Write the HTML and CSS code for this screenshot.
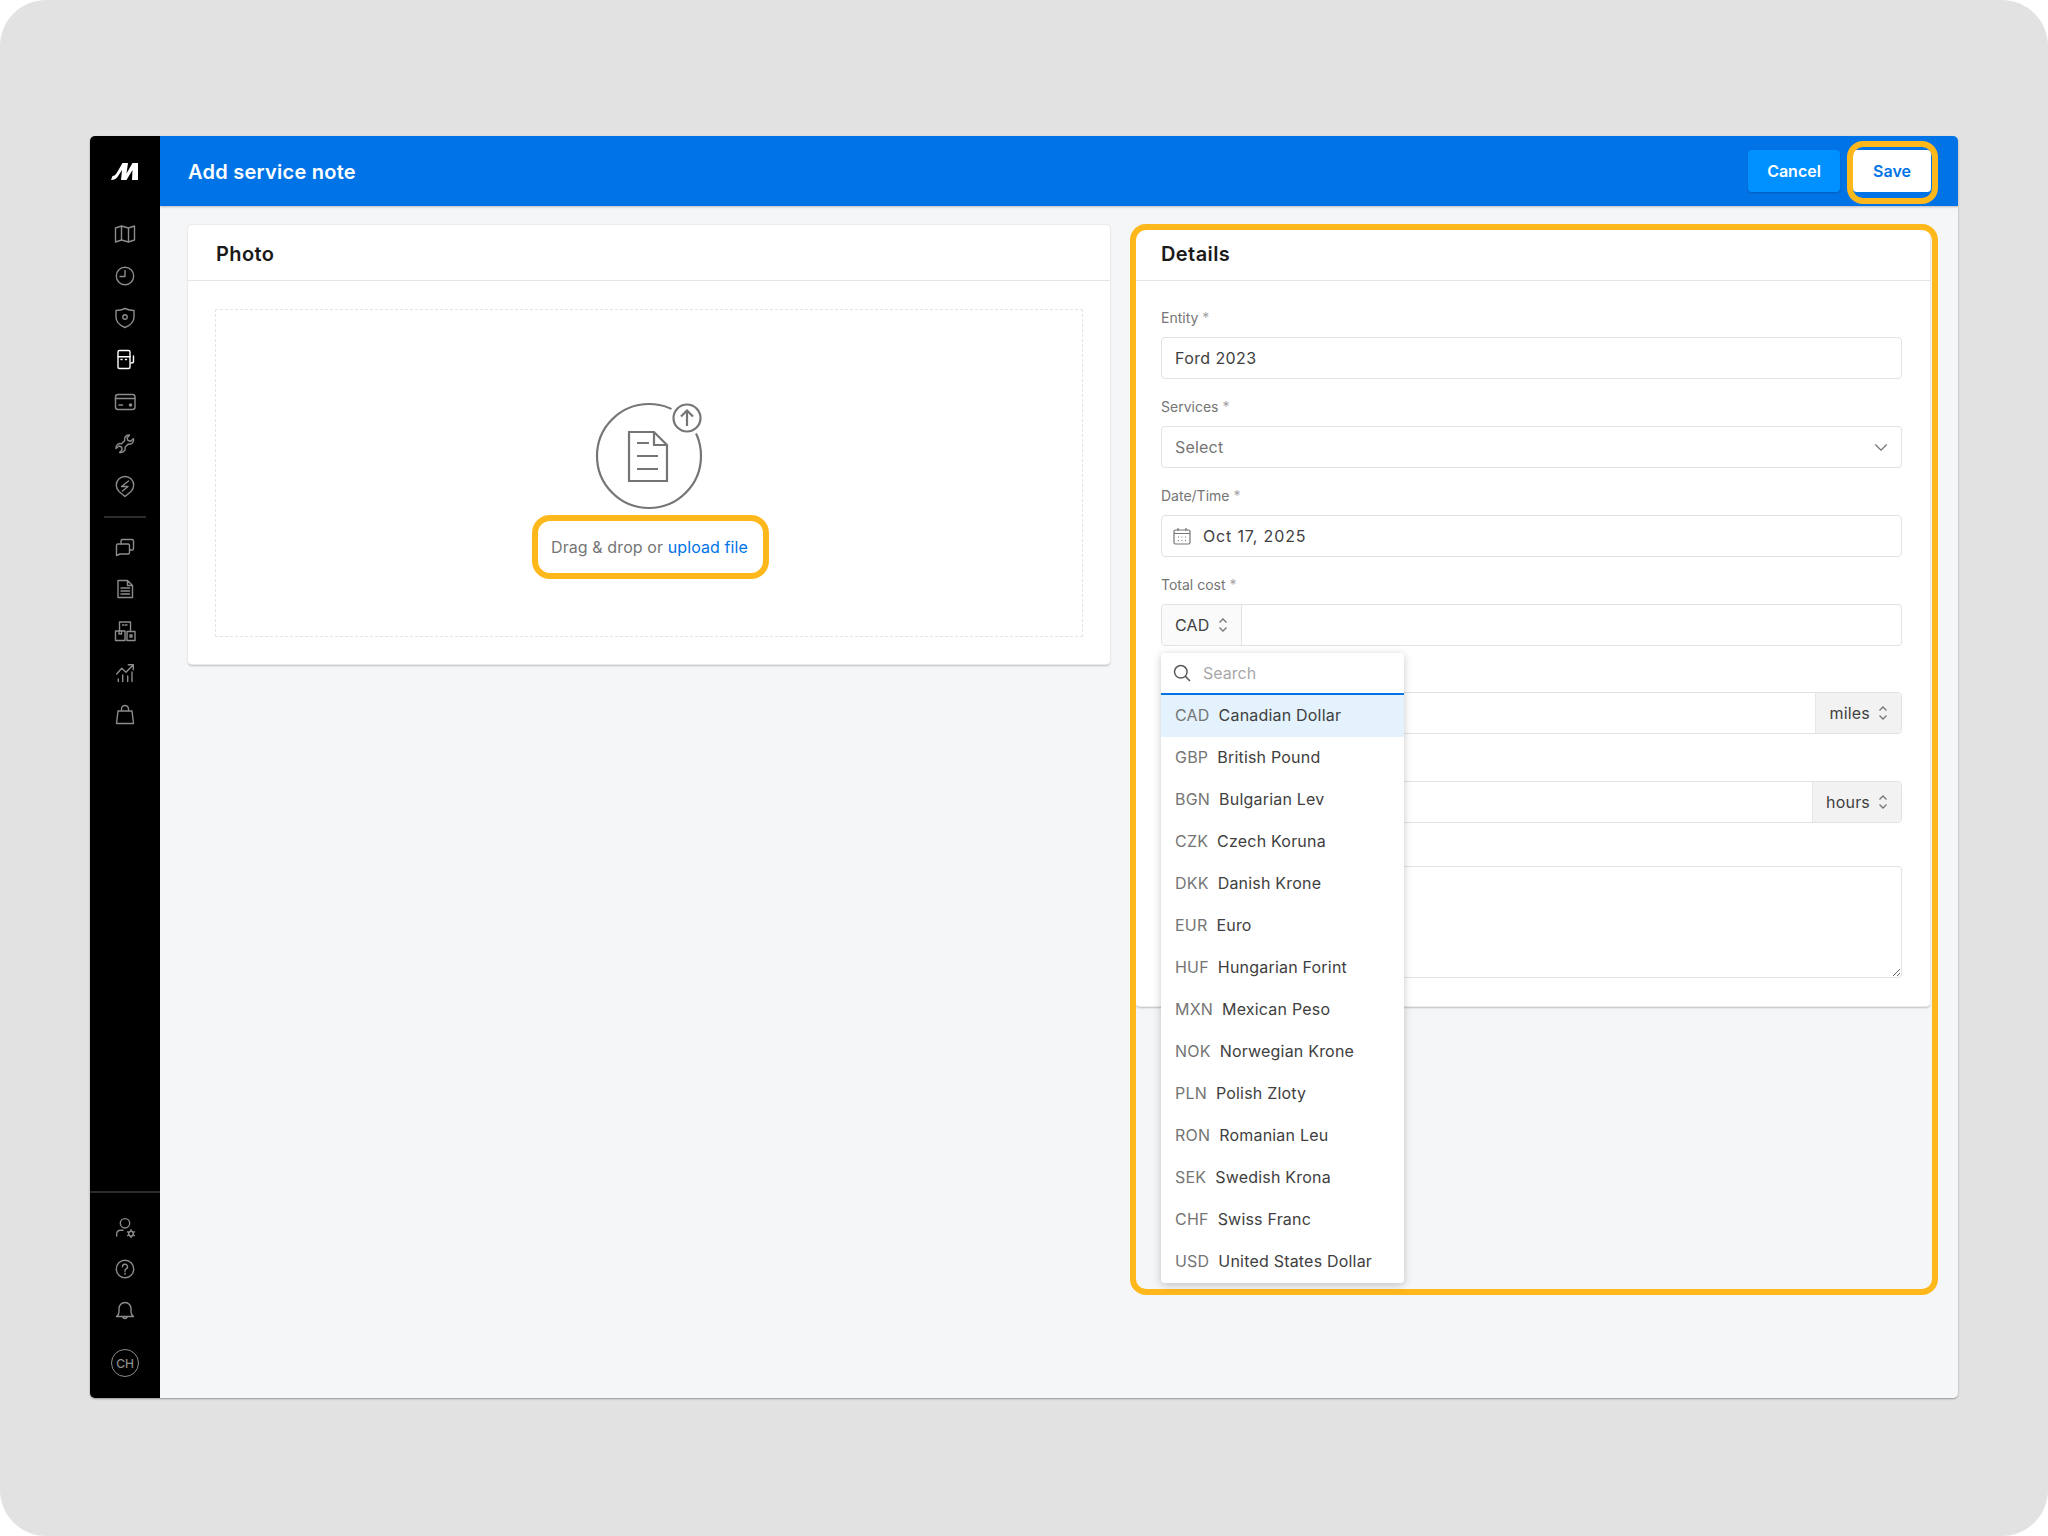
FILE: index.html
```html
<!DOCTYPE html>
<html lang="en">

<head>
  <meta charset="UTF-8">
  <meta name="viewport" content="width=device-width, initial-scale=1.0">
  <title>Add service note</title>
  <link rel="stylesheet" href="styles.css">
</head>

<body>
  <div class="stage">
    <div class="app">
      <!-- sidebar -->
      <div class="side">
        <div class="logo">
          <svg width="27" height="17" viewBox="0 0 27 17"><path fill="#fff" d="M0 17 L1.5 13 Q4 13 6 9.5 L11.5 0 H17 L15.5 10.5 L21.5 0 H27 V17 H21 L21.5 7 L15.5 17 H10 L11 7 L6.5 14 Q4.5 17 0 17Z"/></svg>
        </div>
        <div class="nav-item"><svg class="ico" viewBox="0 0 30 30"><path d="M5.5 9 11.5 7 18.5 9 24.5 7V21L18.5 23 11.5 21 5.5 23ZM11.5 7V21M18.5 9V23"/></svg></div>
        <div class="nav-item"><svg class="ico" viewBox="0 0 30 30"><circle cx="15" cy="15" r="8.7"/><path d="M15 9.5V15.5H10"/></svg></div>
        <div class="nav-item"><svg class="ico" viewBox="0 0 30 30"><path d="M15 5.5C12 7 9 7.5 6 7.5V14C6 19 10 22.5 15 24.5 20 22.5 24 19 24 14V7.5C21 7.5 18 7 15 5.5Z"/><circle cx="15" cy="14" r="2.2"/></svg></div>
        <div class="nav-item"><svg class="ico ico-on" viewBox="0 0 30 30"><rect x="8" y="5.5" width="12" height="18" rx="1.5"/><path d="M8 11.7H20M23.5 11V16.5C23.5 17.5 22.5 18 21 18M11 14.5H12M15.5 14.5H16.5"/></svg></div>
        <div class="nav-item"><svg class="ico" viewBox="0 0 30 30"><rect x="5.5" y="7.5" width="19.5" height="15" rx="2.5"/><path d="M5.5 11.5H25M9 18H12.5"/><circle class="solid" cx="20.5" cy="18" r="1.8"/></svg></div>
        <div class="nav-item"><svg class="ico" viewBox="0 0 30 30"><path d="M19.5 6C16 5.6 13.8 8.6 14.8 11.6L11.6 14.8C8.6 13.8 5.6 16 6 19.5L9 17 11.5 18 12.2 20.8 9.6 23.5C13 24.2 16 21.5 15 18.2L18.2 15C21.5 16 24.3 13 23.5 9.6L20.8 12.2 18 11.5 17 9Z"/></svg></div>
        <div class="nav-item"><svg class="ico" viewBox="0 0 30 30"><path d="M15 25.5 9 20.5A8.7 8.7 0 1 1 21 20.5ZM18.5 10 11.5 15.5H18L12.5 20"/></svg></div>
        <div class="side-line"></div>
        <div class="nav-item"><svg class="ico" viewBox="0 0 30 30"><path d="M11 12V9A1.5 1.5 0 0 1 12.5 7.5H22A1.5 1.5 0 0 1 23.5 9V16.5A1.5 1.5 0 0 1 22 18H19.5"/><path d="M8 12H18A1.5 1.5 0 0 1 19.5 13.5V20.5A1.5 1.5 0 0 1 18 22H10L6.5 23.5V13.5A1.5 1.5 0 0 1 8 12Z"/></svg></div>
        <div class="nav-item"><svg class="ico" viewBox="0 0 30 30"><path d="M8 6.5H17.5L22.5 11.5V23.5H8ZM17.5 6.5V11.5H22.5M11 14H19.5M11 17H19.5M11 20H19.5"/></svg></div>
        <div class="nav-item"><svg class="ico" viewBox="0 0 30 30"><path d="M9.5 15V6H20.5V15M12.5 9H14M15.5 9H17"/><rect x="5.5" y="15" width="9.5" height="9.5"/><path d="M9 15V18H11.5V15"/><rect x="17" y="15.5" width="8" height="9"/><rect x="20" y="19" width="2" height="2"/></svg></div>
        <div class="nav-item"><svg class="ico" viewBox="0 0 30 30"><path d="M6.7 16 11.7 10.3 16 14.3 23.3 6.7M18.3 6.7H23.3V11.7M8.3 21V23.5M12.7 17V23.5M17.7 18V23.5M22 14V23.5"/></svg></div>
        <div class="nav-item"><svg class="ico" viewBox="0 0 30 30"><path d="M8 11H22L23.5 23.5H6.5ZM11.5 11V9A3.5 3.5 0 0 1 18.5 9V11"/></svg></div>

        <div class="side-bottom">
          <div class="nav-item"><svg class="ico" viewBox="0 0 30 30"><circle cx="15" cy="11.3" r="4.7"/><path d="M6.7 24V21.5A3.5 3.5 0 0 1 10.5 18.3H13"/><circle cx="21" cy="21.7" r="2.4"/><path d="M21 17.8V19.3M21 24.1V25.6M17.6 19.8 18.9 20.5M23.1 22.9 24.4 23.6M17.6 23.6 18.9 22.9M23.1 20.5 24.4 19.8"/></svg></div>
          <div class="nav-item"><svg class="ico" viewBox="0 0 30 30"><circle cx="15" cy="15" r="8.7"/><path d="M12.5 12.7A2.5 2.5 0 1 1 16.2 14.9C15.4 15.4 15 15.9 15 16.8V17.2M15 19.3V20.2"/></svg></div>
          <div class="nav-item"><svg class="ico" viewBox="0 0 30 30"><path d="M15 6.5A6 6 0 0 0 9 12.5V16C9 18 8 19.5 6.5 20.5H23.5C22 19.5 21 18 21 16V12.5A6 6 0 0 0 15 6.5ZM13 20.5A2 2 0 0 0 17 20.5"/></svg></div>
          <div class="avatar">CH</div>
        </div>
      </div>

      <div class="content">
        <!-- top bar -->
        <div class="topbar">
          <div class="page-title">Add service note</div>
          <div class="top-btns">
            <div class="btn btn-cancel">Cancel</div>
            <div class="btn btn-save">Save</div>
          </div>
          <div class="hl hl-save"></div>
        </div>

        <div class="main">
          <!-- photo -->
          <div class="card card-photo">
            <div class="card-head">Photo</div>
            <div class="card-body">
              <div class="drop">
                <svg class="drop-ico" width="120" height="110" viewBox="0 0 120 110">
                  <circle cx="58" cy="54" r="52"/>
                  <circle class="halo" cx="96" cy="16" r="18"/>
                  <circle cx="96" cy="16" r="13.5"/>
                  <path d="M96 24V9M90 14.5 96 8.5 102 14.5"/>
                  <path d="M38 30H63L76 43V79H38ZM63 30V43H76M46 41H58M46 54H67M46 67H67"/>
                </svg>
                <div class="drop-text">Drag &amp; drop or <span class="link">upload file</span></div>
              </div>
            </div>
          </div>

          <!-- details -->
          <div class="card card-details">
            <div class="card-head">Details</div>
            <div class="card-body form">
              <div class="field">
                <div class="lbl">Entity <span class="star">*</span></div>
                <div class="inp inp-text">Ford 2023</div>
              </div>
              <div class="field">
                <div class="lbl">Services <span class="star">*</span></div>
                <div class="inp inp-select">
                  <span class="muted">Select</span>
                  <svg class="chev" width="14" height="9" viewBox="0 0 16 10"><path d="M1.5 1.5 8 8 14.5 1.5"/></svg>
                </div>
              </div>
              <div class="field">
                <div class="lbl">Date/Time <span class="star">*</span></div>
                <div class="inp inp-date">
                  <svg class="cal" width="18" height="18" viewBox="0 0 18 18"><rect x="1" y="3" width="16" height="14" rx="1.5"/><path d="M1 6.5H17M5 1V4M13 1V4"/><path d="M5 10H6M8.5 10H9.5M12 10H13M5 13.5H6M8.5 13.5H9.5M12 13.5H13"/></svg>
                  <span>Oct 17, 2025</span>
                </div>
              </div>
              <div class="field field-cost">
                <div class="lbl">Total cost <span class="star">*</span></div>
                <div class="group">
                  <div class="addon addon-left">CAD <svg class="updown" width="10" height="16" viewBox="0 0 10 16"><path d="M1.5 5.5 5 2 8.5 5.5M1.5 10.5 5 14 8.5 10.5"/></svg></div>
                  <div class="group-fill"></div>

                  <!-- open currency menu -->
                  <div class="menu">
                    <div class="menu-search">
                      <svg class="search-ico" width="18" height="18" viewBox="0 0 18 18"><circle cx="7.8" cy="7.8" r="6.3"/><path d="M12.4 12.4 17 17"/></svg>
                      <span class="search-ph">Search</span>
                    </div>
                    <div class="opt opt-on"><span class="code">CAD</span>Canadian Dollar</div>
                    <div class="opt"><span class="code">GBP</span>British Pound</div>
                    <div class="opt"><span class="code">BGN</span>Bulgarian Lev</div>
                    <div class="opt"><span class="code">CZK</span>Czech Koruna</div>
                    <div class="opt"><span class="code">DKK</span>Danish Krone</div>
                    <div class="opt"><span class="code">EUR</span>Euro</div>
                    <div class="opt"><span class="code">HUF</span>Hungarian Forint</div>
                    <div class="opt"><span class="code">MXN</span>Mexican Peso</div>
                    <div class="opt"><span class="code">NOK</span>Norwegian Krone</div>
                    <div class="opt"><span class="code">PLN</span>Polish Zloty</div>
                    <div class="opt"><span class="code">RON</span>Romanian Leu</div>
                    <div class="opt"><span class="code">SEK</span>Swedish Krona</div>
                    <div class="opt"><span class="code">CHF</span>Swiss Franc</div>
                    <div class="opt"><span class="code">USD</span>United States Dollar</div>
                  </div>
                </div>
              </div>
              <div class="field">
                <div class="lbl"></div>
                <div class="group">
                  <div class="group-fill"></div>
                  <div class="addon addon-right">miles <svg class="updown" width="10" height="16" viewBox="0 0 10 16"><path d="M1.5 5.5 5 2 8.5 5.5M1.5 10.5 5 14 8.5 10.5"/></svg></div>
                </div>
              </div>
              <div class="field">
                <div class="lbl"></div>
                <div class="group">
                  <div class="group-fill"></div>
                  <div class="addon addon-right">hours <svg class="updown" width="10" height="16" viewBox="0 0 10 16"><path d="M1.5 5.5 5 2 8.5 5.5M1.5 10.5 5 14 8.5 10.5"/></svg></div>
                </div>
              </div>
              <div class="field field-notes">
                <textarea class="notes"></textarea>
              </div>
            </div>
          </div>
          <div class="hl hl-details"></div>
        </div>
      </div>
    </div>
  </div>
</body>

</html>
```
FILE: styles.css
```css
* {
  box-sizing: border-box;
}

html,
body {
  margin: 0;
  background: #fff;
  font-family: Inter, "Liberation Sans", sans-serif;
}

.stage {
  width: 2048px;
  height: 1536px;
  padding: 136px 90px 138px 90px;
  background: #e2e2e2;
  border-radius: 46px;
}

.app {
  display: flex;
  height: 1262px;
  border-radius: 5px;
  overflow: hidden;
  box-shadow: 0 1px 2px rgba(0, 0, 0, .35);
}

/* sidebar */
.side {
  display: flex;
  flex-direction: column;
  flex: none;
  width: 70px;
  background: #000;
}

.logo {
  display: flex;
  justify-content: center;
  align-items: center;
  height: 70px;
  margin-bottom: 7px;
  padding-right: 2px;
}

.nav-item {
  display: flex;
  justify-content: center;
  align-items: center;
  height: 42px;
}

.ico {
  width: 30px;
  height: 30px;
  fill: none;
  stroke: #8c8c8c;
  stroke-width: 1.4;
  stroke-linejoin: round;
  stroke-linecap: round;
}

.ico .solid {
  fill: #8c8c8c;
  stroke: none;
}

.ico-on {
  stroke: #fff;
}

.side-line {
  width: 42px;
  height: 2px;
  margin: 9px auto 8px;
  background: #2b2b2b;
}

.side-bottom {
  margin-top: auto;
  padding: 13px 0 21px;
  border-top: 2px solid #2b2b2b;
}

.avatar {
  display: flex;
  justify-content: center;
  align-items: center;
  width: 28px;
  height: 28px;
  margin: 17px auto 0;
  border: 1.5px solid #8c8c8c;
  border-radius: 50%;
  color: #8c8c8c;
  font-size: 12px;
  font-weight: 500;
}

/* right side */
.content {
  display: flex;
  flex-direction: column;
  flex: 1;
  min-width: 0;
  background: #f4f6f8;
}

.topbar {
  position: relative;
  display: flex;
  justify-content: space-between;
  align-items: center;
  flex: none;
  height: 70px;
  padding: 0 27px 0 28px;
  background: #0073e6;
  box-shadow: 0 1px 2px rgba(0, 0, 0, .25);
}

.page-title {
  padding-top: 2px;
  color: #fff;
  font-size: 20px;
  font-weight: 600;
  letter-spacing: .25px;
}

.top-btns {
  display: flex;
  gap: 13px;
}

.btn {
  display: flex;
  justify-content: center;
  align-items: center;
  height: 42px;
  border-radius: 4px;
  font-size: 16px;
  font-weight: 600;
}

.btn-cancel {
  width: 92px;
  background: #0090ff;
  color: #fff;
  box-shadow: 0 1px 2px rgba(0, 0, 0, .2);
}

.btn-save {
  width: 78px;
  background: #fff;
  color: #0073e6;
}

/* orange callouts */
.hl {
  position: absolute;
  border: 6px solid #ffb81c;
  pointer-events: none;
}

.hl-save {
  top: 5px;
  right: 20px;
  width: 91px;
  height: 63px;
  border-radius: 16px;
}

.hl-details {
  top: 18px;
  left: 970px;
  width: 808px;
  height: 1071px;
  border-radius: 16px;
}

.main {
  position: relative;
  display: flex;
  align-items: flex-start;
  gap: 26px;
  flex: 1;
  padding: 19px 28px 0;
}

.card {
  flex: none;
  background: #fff;
  border-radius: 4px;
  box-shadow: 0 0 0 1px #ebebeb, 0 2px 2px rgba(0, 0, 0, .22);
}

.card-photo {
  width: 922px;
  height: 439px;
}

.card-details {
  width: 794px;
  height: 781px;
}

.card-head {
  height: 56px;
  padding: 0 28px;
  border-bottom: 1px solid #e4e4e4;
  color: #1a1a1a;
  font-size: 20px;
  font-weight: 600;
  letter-spacing: .4px;
  line-height: 58px;
}

.card-details .card-head {
  padding-left: 25px;
}

.card-photo .card-body {
  padding: 28px 27px 27px;
}

/* drop zone */
.drop {
  display: flex;
  flex-direction: column;
  align-items: center;
  height: 328px;
  padding-top: 92px;
  border: 1px dashed #e4e4e4;
}

.drop-ico {
  flex: none;
  margin-left: 4px;
  fill: none;
  stroke: #757575;
  stroke-width: 2.2;
}

.drop-ico .halo {
  fill: #fff;
  stroke: none;
}

.drop-text {
  flex: none;
  width: 237px;
  height: 64px;
  margin: 3px 0 0 3px;
  padding-right: 2px;
  border: 6px solid #ffb81c;
  border-radius: 18px;
  color: #757575;
  font-size: 16px;
  letter-spacing: .1px;
  line-height: 52px;
  text-align: center;
  white-space: nowrap;
}

.link {
  color: #0073e6;
}

/* form */
.form {
  padding: 27px 28px 28px 25px;
}

.field {
  margin-bottom: 18px;
}

.field-cost {
  margin-bottom: 17px;
}

.lbl {
  height: 20px;
  margin-bottom: 9px;
  color: #757575;
  font-size: 14px;
  line-height: 20px;
}

.star {
  color: #a3a3a3;
}

.inp {
  display: flex;
  align-items: center;
  height: 42px;
  padding: 0 13px;
  border: 1px solid #e2e2e2;
  border-radius: 4px;
  color: #404040;
  font-size: 16px;
}

.inp-text {
  letter-spacing: .4px;
}

.inp-select {
  justify-content: space-between;
  letter-spacing: .2px;
}

.muted {
  color: #757575;
}

.chev {
  flex: none;
  fill: none;
  stroke: #757575;
  stroke-width: 1.5;
}

.inp-date {
  gap: 12px;
  padding-left: 11px;
  letter-spacing: .85px;
}

.cal {
  flex: none;
  fill: none;
  stroke: #757575;
  stroke-width: 1.2;
}

.group {
  position: relative;
  display: flex;
  height: 42px;
  border: 1px solid #e2e2e2;
  border-radius: 4px;
}

.group-fill {
  flex: 1;
}

.addon {
  display: flex;
  align-items: center;
  gap: 8px;
  flex: none;
  height: 40px;
  padding: 0 13px;
  color: #404040;
  font-size: 16px;
  letter-spacing: .2px;
}

.addon-left {
  width: 80px;
  background: #fafafa;
  border-right: 1px solid #e2e2e2;
  border-radius: 4px 0 0 4px;
}

.addon-right {
  background: #f2f2f2;
  border-left: 1px solid #e8e8e8;
  border-radius: 0 4px 4px 0;
}

.updown {
  flex: none;
  fill: none;
  stroke: #757575;
  stroke-width: 1.3;
}

.field-notes {
  margin: -4px 0 0;
  padding-top: 29px;
}

.notes {
  display: block;
  width: 100%;
  height: 112px;
  border: 1px solid #e2e2e2;
  border-radius: 4px;
  outline: none;
  background: #fff;
}

/* currency menu */
.menu {
  position: absolute;
  top: 48px;
  left: -1px;
  z-index: 5;
  width: 243px;
  background: #fff;
  border-radius: 4px;
  box-shadow: 0 2px 8px rgba(0, 0, 0, .22);
}

.menu-search {
  display: flex;
  align-items: center;
  gap: 12px;
  height: 42px;
  padding-left: 12px;
  border-bottom: 2px solid #0073e6;
}

.search-ico {
  flex: none;
  fill: none;
  stroke: #595959;
  stroke-width: 1.5;
}

.search-ph {
  color: #a8a8a8;
  font-size: 16px;
}

.opt {
  height: 42px;
  padding-left: 14px;
  color: #404040;
  font-size: 16px;
  letter-spacing: .2px;
  line-height: 41px;
  white-space: nowrap;
}

.opt-on {
  background: #e3f2fd;
}

.code {
  margin-right: 9px;
  color: #757575;
}
```
